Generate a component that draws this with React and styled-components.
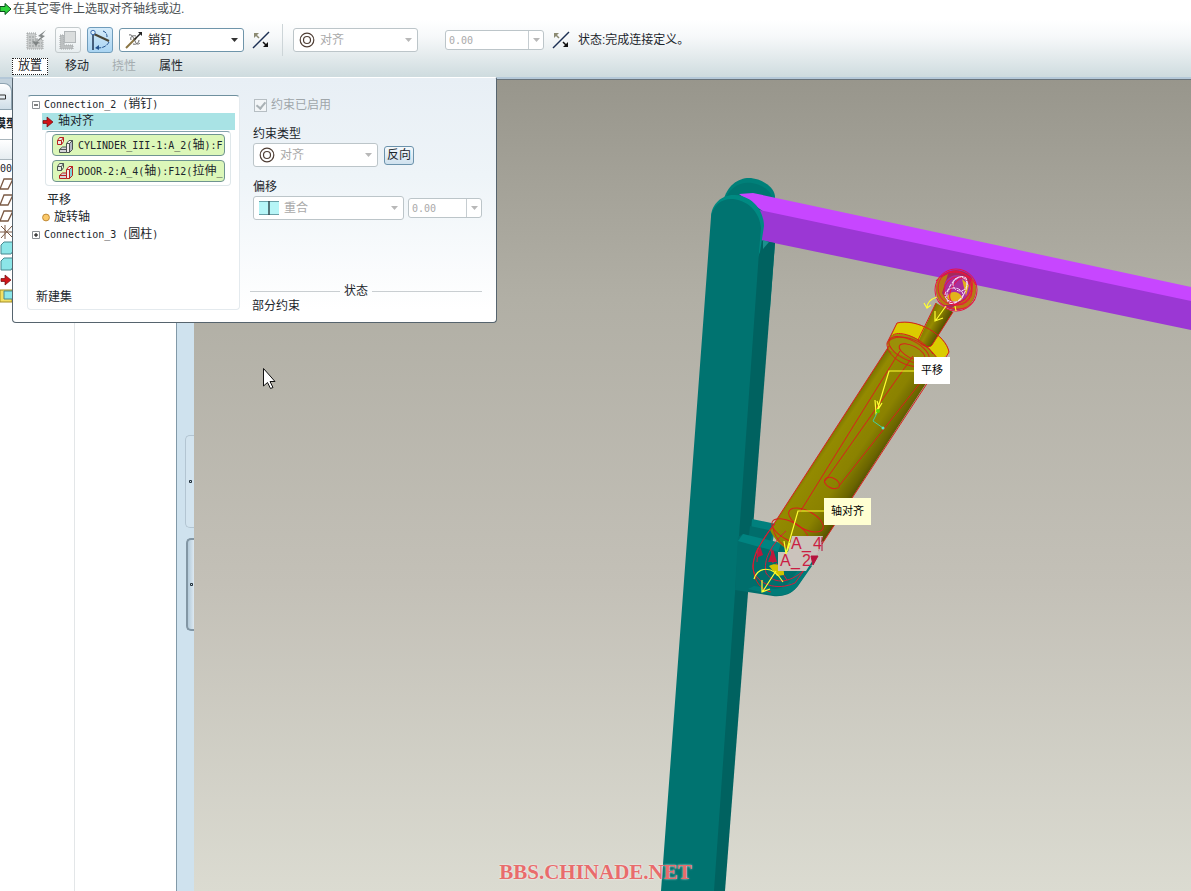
import React from 'react';
import styled, { createGlobalStyle } from 'styled-components';

const GlobalStyle = createGlobalStyle`
    * {
        box-sizing: border-box;
    }
    body {
        margin: 0;
        overflow: hidden;
        background: #fff;
    }
    body, button, input, select {
        font-family: "Liberation Sans", "Noto Sans CJK SC", sans-serif;
        font-size: 12px;
        line-height: 17px;
        color: #1c262c;
    }
    button {
        padding: 0;
        border: 0;
        background: none;
        white-space: nowrap;
    }
    svg {
        display: block;
        flex-shrink: 0;
    }
`

const Page = styled.div`
    display: flex;
    flex-direction: column;
    height: 100vh;
    position: relative;
    overflow: hidden;
`

const Header = styled.header`
    flex-shrink: 0;
    display: flex;
    flex-direction: column;
    background: linear-gradient(#fff 20px, #f7f9fa 36px, #e4ebed 56px, #cfdcdf 76px);
    border-bottom: 2px solid #b4c8d8;
    padding-bottom: 2px;
`

const Prompt = styled.div`
    display: flex;
    align-items: center;
    height: 18px;
    gap: 1px;
    margin-bottom: 6px;
    color: #4a4f52;
`

const Toolbar = styled.div`
    display: flex;
    align-items: center;
    gap: 6px;
    height: 32px;
    padding-left: 23px;
`

const Tool = styled.button`
    width: 26px;
    height: 26px;
    display: flex;
    align-items: center;
    justify-content: center;
    border-radius: 3px;
    border: 1px solid ${props => props.$active ? '#6f9cbb' : props.$framed ? '#c3cacc' : 'transparent'};
    background: ${props => props.$active ? 'linear-gradient(#d5ebfa, #a9d4f2)' : 'none'};
`

const FlipTool = styled.button`
    width: 22px;
    height: 22px;
    display: flex;
    align-items: center;
    justify-content: center;
`

const Separator = styled.div`
    width: 1px;
    height: 32px;
    margin: 0 4px;
    background: #cdd5d8;
`

const Field = styled.div`
    width: ${props => props.$width};
    height: 24px;
    display: flex;
    align-items: center;
    gap: 5px;
    padding: 0 5px;
    border: 1px solid ${props => props.$off ? '#bcc5c9' : '#6f95aa'};
    border-radius: 3px;
    background: #fff;
`

const Select = styled.select`
    flex: 1;
    min-width: 0;
    appearance: none;
    border: 0;
    padding: 0;
    background: none;
    color: #1c262c;
    &:disabled {
        color: #a9a9a9;
        opacity: 1;
    }
`

const Combo = styled.div`
    width: ${props => props.$width};
    height: 20px;
    display: flex;
    border: 1px solid #bcc5c9;
    border-radius: 3px;
    background: #fff;
`

const Number = styled.input`
    flex: 1;
    min-width: 0;
    border: 0;
    padding: 0 3px;
    background: none;
    color: #a9a9a9;
    font-family: "DejaVu Sans Mono", monospace;
    font-size: 10px;
`

const ComboButton = styled.button`
    width: 15px;
    display: flex;
    align-items: center;
    justify-content: center;
    border-left: 1px solid #c6cdd1;
`

const FieldSpacer = styled.div`
    width: 15px;
`

const Tabs = styled.nav`
    display: flex;
    gap: 11px;
    height: 19px;
    align-items: flex-end;
    padding-left: 12px;
`

const Tab = styled.button`
    height: 17px;
    line-height: 15px;
    padding: 0 5px;
    border: 1px dotted ${props => props.$active ? '#222' : 'transparent'};
    background: ${props => props.$active ? '#fff' : 'none'};
    &:disabled {
        color: #a5adb0;
    }
`

const Workspace = styled.main`
    flex: 1;
    min-height: 0;
    display: flex;
`

const Sidebar = styled.aside`
    width: 176px;
    flex-shrink: 0;
    display: flex;
    background: #fff;
`

const TreeColumn = styled.div`
    width: 75px;
    border-right: 1px solid #e3e6e8;
`

const TreeClip = styled.div`
    width: 12px;
    overflow: hidden;
    padding-top: 4px;
    display: flex;
    flex-direction: column;
    background: linear-gradient(#c3d2dc 30px, #fff 31px);
`

const SideTab = styled.div`
    height: 27px;
    border: 1px solid #8ea3b0;
    border-left: 0;
    border-radius: 0 8px 0 0;
    background: linear-gradient(#fff, #cfdee8);
    display: flex;
    align-items: center;
`

const SideTitle = styled.div`
    height: 29px;
    display: flex;
    align-items: center;
    justify-content: center;
    white-space: nowrap;
    font-weight: bold;
`

const SideHeader = styled.div`
    height: 21px;
    border-top: 1px solid #aab6bd;
    border-bottom: 1px solid #aab6bd;
    background: linear-gradient(#fff, #e6edf1);
`

const SideRow = styled.div`
    height: 16px;
    display: flex;
    align-items: center;
`

const Splitter = styled.div`
    width: 18px;
    flex-shrink: 0;
    display: flex;
    flex-direction: column;
    align-items: flex-end;
    gap: 10px;
    padding-top: 356px;
    background: #cfe2ee;
    border-left: 1px solid #8299a8;
`

const Grip = styled.button`
    width: ${props => props.$dark ? '8px' : '9px'};
    height: 93px;
    display: flex;
    align-items: center;
    justify-content: center;
    border: ${props => props.$dark ? '2px solid #8296a4' : '1px solid #b3c5d2'};
    border-right: 0;
    border-radius: 5px 0 0 5px;
    background: ${props => props.$dark ? 'linear-gradient(90deg, #b4cad9, #dce9f2)' : '#d3e4ef'};
`

const Viewport = styled.section`
    flex: 1;
    min-width: 0;
    position: relative;
    overflow: hidden;
    border-top: 1px solid #69737a;
    background: linear-gradient(#98968c, #b1afa5 27%, #c3c0b7 62%, #dbdbd1);
`

const Scene = styled.svg`
    width: 100%;
    height: 100%;
`

const Callout = styled.div`
    position: absolute;
    left: ${props => props.$x}px;
    top: ${props => props.$y}px;
    padding: 5px 7px;
    font-size: 11px;
    color: #000;
    background: ${props => props.$pale ? '#ffffd2' : '#fff'};
`

const Watermark = styled.div`
    position: absolute;
    left: 0;
    right: 0;
    bottom: 7px;
    text-align: center;
    font: bold 21px/24px "Liberation Serif", serif;
    color: #e86c6c;
    text-shadow: 0 0 2px #fff;
    pointer-events: none;
`

const Panel = styled.section`
    position: absolute;
    left: 12px;
    top: 77px;
    width: 485px;
    height: 246px;
    display: flex;
    gap: 10px;
    padding: 17px 14px 8px;
    border: 1px solid #56646e;
    border-top-color: #fff;
    border-radius: 2px 2px 4px 4px;
    background: linear-gradient(#e8eff5, #eef4f8 40%, #fff 95%);
`

const Collector = styled.div`
    width: 213px;
    flex-shrink: 0;
    display: flex;
    flex-direction: column;
    margin-bottom: 4px;
    border: 1px solid #e4eaee;
    border-top-color: #6f909e;
    border-radius: 4px;
    background: #fff;
    padding: 0 4px 3px;
`

const Item = styled.button`
    height: 17px;
    display: flex;
    align-items: center;
    gap: 4px;
    margin-left: ${props => props.$indent || 0}px;
    background: ${props => props.$selected ? '#a9e3e5' : 'none'};
`

const References = styled.div`
    display: flex;
    flex-direction: column;
    gap: 4px;
    margin: 1px 4px 6px 13px;
    padding: 2px 5px 3px 6px;
    border: 1px solid #dfe7ea;
    border-top-color: #86a3ae;
    border-radius: 4px;
`

const Chip = styled.button`
    height: 22px;
    display: flex;
    align-items: center;
    gap: 4px;
    padding: 0 1px 0 3px;
    border: 1px solid #6f9490;
    border-radius: 4px;
    background: #dcf7b9;
    overflow: hidden;
`

const Latin = styled.span`
    font-family: "DejaVu Sans Mono", monospace;
    font-size: 10px;
    white-space: pre;
`

const NewSet = styled(Item)`
    margin-top: auto;
    padding-left: 4px;
`

const Settings = styled.div`
    flex: 1;
    display: flex;
    flex-direction: column;
    padding-top: 1px;
`

const SettingRow = styled.div`
    display: flex;
    align-items: center;
    gap: 4px;
    padding-left: 3px;
    margin-top: ${props => props.$top || 0}px;
`

const CheckLabel = styled.label`
    display: flex;
    align-items: center;
    gap: 4px;
    height: 18px;
    color: #9fa6aa;
`

const Check = styled.input`
    appearance: none;
    width: 13px;
    height: 13px;
    margin: 0 0 0 1px;
    border: 1px solid #b6bec3;
    background: #f2f5f7;
    display: grid;
    place-items: center;
    &:checked::before {
        content: "";
        width: 4px;
        height: 7px;
        margin-bottom: 2px;
        border: solid #a9b1b5;
        border-width: 0 2px 2px 0;
        transform: rotate(40deg);
    }
`

const FlipButton = styled.button`
    width: 30px;
    height: 19px;
    margin-left: 2px;
    border: 1px solid #6c93ac;
    border-radius: 3px;
    background: linear-gradient(#f4f9fc, #cfe1ee);
`

const StatusHead = styled.div`
    display: flex;
    align-items: center;
    gap: 4px;
    height: 16px;
    margin-top: auto;
    &::before, &::after {
        content: "";
        flex: 9;
        height: 1px;
        background: #c9ced1;
    }
    &::after {
        flex: 11;
    }
`

const StatusText = styled.div`
    padding-left: 2px;
    height: 15px;
    line-height: 15px;
`

// Latin runs use the fixed pitch face, everything else the CJK one
const Mixed = ({ text }) => (
    <span>
        {text.split(/([\x20-\x7e]+)/).map((part, i) =>
            /[\x20-\x7e]/.test(part) ? <Latin key={i}>{part}</Latin> : part
        )}
    </span>
)

const Arrow = ({ color = '#333' }) => (
    <svg width="7" height="4" viewBox="0 0 7 4"><path d="M0 0h7L3.500 4z" fill={color} /></svg>
)

const PromptIcon = () => (
    <svg width="12" height="14" viewBox="0 0 12 14">
        <path d="M0 4.500h5V1.500l6 5.500-6 5.500V9.500H0z" fill="#2fd33c" stroke="#0b4f1c" />
    </svg>
)

const RedArrow = () => (
    <svg width="12" height="12" viewBox="0 0 12 12">
        <path d="M1 4.500h4V1l6 5-6 5V7.500H1z" fill="#d01418" stroke="#6d0c10" strokeWidth=".7" />
    </svg>
)

const FlipIcon = () => (
    <svg width="18" height="18" viewBox="0 0 18 18">
        <path d="M1 17 17 1" stroke="#1b2f52" strokeWidth="1.500" />
        <path d="M2 2h5L2 7z" fill="#8b8a72" />
        <path d="m4 4 3 3" stroke="#8b8a72" strokeWidth="1.500" />
        <path d="M16 16h-5l5-5z" fill="#111" />
        <path d="m11 11 3 3" stroke="#111" strokeWidth="1.500" />
    </svg>
)

const SketchIcon = () => (
    <svg width="22" height="22" viewBox="0 0 22 22">
        <path d="M2 4h9v6h3l4 1v9H2z" fill="#c9cccc" stroke="#9a9e9e" strokeDasharray="1 1" />
        <path d="M4 8h6M4 11h9M4 14h13M4 17h13" stroke="#979c9c" strokeDasharray="2 1" />
        <path d="m7 12 4 5 3-4z" fill="#7d8282" />
        <path d="m21 1-8 6 3 1-8 8 12-9-3-1z" fill="#858a8a" />
    </svg>
)

const CopyIcon = () => (
    <svg width="20" height="20" viewBox="0 0 20 20">
        <path d="M2 5h4v10h9v4H2z" fill="#bcc0c1" stroke="#a4a9aa" strokeDasharray="1 1" />
        <rect x="6.500" y="1.500" width="11" height="11" fill="#dadddd" stroke="#b2b7b9" />
    </svg>
)

const HingeIcon = () => (
    <svg width="22" height="22" viewBox="0 0 22 22" fill="none">
        <path d="M4 5v16" stroke="#1f3553" strokeWidth="1.500" />
        <path d="m5 5 15 7" stroke="#4b4637" strokeWidth="2" />
        <circle cx="4" cy="3.500" r="2.200" fill="#dff1ff" stroke="#3b6cae" />
        <path d="M14 2c3 1 4 3 4 6M20 13c-2 4-6 6-11 6" stroke="#24528e" strokeDasharray="4 1" />
        <path d="m10 16-4 3 4 2z" fill="#24528e" />
    </svg>
)

const PinIcon = () => (
    <svg width="18" height="18" viewBox="0 0 18 18" fill="none">
        <path d="M1 17 11 7" stroke="#8b7543" strokeWidth="2" />
        <path d="m9 9 7-7" stroke="#222" strokeWidth="1.500" />
        <path d="M17 1v4l-4-4z" fill="#222" />
        <path d="M4 4c3-1 4 2 6 6 1 3 3 4 5 2M11 5C7 4 5 6 6 9M8 13c3 1 6-1 6-4" stroke="#666" />
    </svg>
)

const AlignIcon = () => (
    <svg width="16" height="16" viewBox="0 0 16 16" fill="none" stroke="#4f3e35" strokeWidth="1.200">
        <circle cx="8" cy="8" r="6.800" />
        <circle cx="8" cy="8" r="3.500" />
    </svg>
)

const CoincidentIcon = () => (
    <svg width="20" height="16" viewBox="0 0 20 16">
        <path d="M0 1h20v14H0z" fill="#b6f5f7" />
        <path d="M0 1.500h20M0 14.500h20" stroke="#6aa0a8" />
        <path d="M10 1v14" stroke="#33484e" strokeWidth="1.500" />
    </svg>
)

const PartIcon = ({ first }) => {
    const a = first ? '#b92222' : '#4c5652'
    const b = first ? '#4c5652' : '#b92222'
    return (
        <svg width="18" height="18" viewBox="0 0 18 18" strokeLinejoin="round">
            <path d="M1.500 4.500h4v4h-4zM1.500 4.500l2-3h4l-2 3M7.500 1.500v4l-2 3" fill="#e8ede4" stroke={a} />
            <path d="M3.500 13.500 6.500 11h4v5.500h-7zM3.500 13.500h7" fill="#d5d5d8" stroke={b} />
            <path d="M10.500 7.500h3v9h-3zM10.500 7.500l2.500-3h3.500l-3 3" fill="#f3eded" stroke={b} />
            <path d="M16.500 4.500v9l-3 3v-9z" fill={first ? '#b4b8c4' : '#7ed3d6'} stroke={b} />
        </svg>
    )
}

const Expander = ({ open }) => (
    <svg width="8" height="8" viewBox="0 0 8 8">
        <path d="M.5.5h7v7h-7z" fill="#fff" stroke="#8a8f93" />
        <path d={open ? 'M2 4h4' : 'M2 4h4M4 2v4'} stroke="#000" />
    </svg>
)

const Bullet = () => (
    <svg width="8" height="9" viewBox="0 0 8 9"><circle cx="4" cy="4.500" r="3.400" fill="#fbc969" stroke="#c08a37" /></svg>
)

const Dot = () => (
    <svg width="3" height="3" viewBox="0 0 3 3"><path d="M.5.5h2v2h-2z" fill="#cfe2ee" stroke="#22303a" /></svg>
)

const PlaneIcon = () => (
    <svg width="14" height="12" viewBox="0 0 14 12"><path d="M0 11 4 1h9L8 11z" fill="none" stroke="#7a5944" strokeWidth="1.300" /></svg>
)

const CsysIcon = () => (
    <svg width="14" height="16" viewBox="0 0 14 16" stroke="#7a5944" fill="none">
        <path d="M0 8h14M1 2l12 12M12 2 1 14M5 1v14" />
    </svg>
)

const SolidIcon = ({ gold }) => (
    <svg width="14" height="14" viewBox="0 0 14 14">
        {gold && <path d="M0 1h12v12H0z" fill="#f3e063" stroke="#a28d25" />}
        <path d={gold ? 'M4 2h10v8H4z' : 'M1 4l3-3h9v9l-2 3H1z'} fill="#8ce6e8" stroke="#47878f" />
    </svg>
)

const TreeTabIcon = () => (
    <svg width="7" height="6" viewBox="0 0 7 6"><path d="M0 1h5.500v4H0" fill="none" stroke="#333" /></svg>
)

const Model = () => (
    <Scene role="img" aria-label="装配模型">
        <defs>
            <linearGradient id="barrel" gradientUnits="userSpaceOnUse" x1="826" y1="435" x2="876" y2="469">
                <stop offset="0" stopColor="#6f6800" />
                <stop offset=".15" stopColor="#938a00" />
                <stop offset=".6" stopColor="#8b8200" />
                <stop offset=".85" stopColor="#6b6500" />
                <stop offset="1" stopColor="#4a4705" />
            </linearGradient>
            <linearGradient id="rod" gradientUnits="userSpaceOnUse" x1="926" y1="320" x2="942" y2="329">
                <stop offset="0" stopColor="#7c7200" />
                <stop offset=".4" stopColor="#968b00" />
                <stop offset="1" stopColor="#575200" />
            </linearGradient>
        </defs>
        <g transform="translate(-194 -80)">
            {/* post */}
            <path d="M723 202C727 184 740 177 751 178C765 180 774 188 775 196V243L770 310H730Z" fill="#008079" />
            <path d="M724 203C728 187 741 181 752 183C763 185 770 190 772 197V240H730Z" fill="#007570" />
            <path d="M739 194 753 193 1191 287V303L764 212Z" fill="#c746ff" />
            <path d="M755 209 764 211 1191 301V330L760 240Z" fill="#9b37d4" />
            <path d="M759 240 775 243 725 891H712Z" fill="#006260" />
            <path d="M763 240 769 242 763 249Z" fill="#1c918e" />
            <path d="M711 216C712 203 723 194 735 195C753 196 764 211 764 226L760 252 740 300Z" fill="#008a82" />
            <path d="M711 217C713 204 723 198 733 199C750 201 760 214 761 228L759 252 714 891H661Z" fill="#007370" />

            {/* bracket */}
            <path d="M752 519 776 524 771 550 750 546Z" fill="#00807d" />
            <path d="M750 526 773 531 769 548 748 544Z" fill="#006d6b" />
            <path d="M738 537 743 534 795 547 815 560 797 587C791 595 781 597 773 596L735 590Z" fill="#006e6c" />
            <path d="M738 541 743 534 781 543 778 552Z" fill="#008481" />
            <path d="M748 589 773 595C783 597 792 593 798 586L812 566 804 562 790 581C784 589 776 590 768 588L754 586Z" fill="#007b78" />

            {/* cylinder */}
            <path d="M889 346 770 530C775 541 783 548 792 551L824 541 943 357Z" fill="url(#barrel)" />
            <path d="M897 323C917 318 946 335 949 352L943 359 888 349 887 343Z" fill="#9c9200" />
            <path d="M897 323C917 318 947 336 949 353L940 361C924 338 906 331 892 335Z" fill="#dbcc00" />
            <path d="M893 335C910 332 929 342 936 360H914L888 350Z" fill="#9b8f08" />
            <path d="M936 303 919 340C919 345 930 349 932 345L953 312Z" fill="url(#rod)" />
            <g fill="none" stroke="#d8201c" strokeWidth="1">
                <path d="M889 346 757 550C749 568 754 588 771 592M943 359 822 544M900 351 800 512M913 356 825 481M935 364 839 486" />
                <path d="M897 323C917 318 946 335 949 352M897 323 887 343C886 355 905 370 925 366M949 352 943 362" />
                <path d="M893 335C900 330 923 338 933 354M889 341C900 331 927 341 938 360M918 340C919 345 930 349 932 345M936 303 918 340M953 312 932 345" />
                <ellipse cx="909" cy="350" rx="22" ry="10" transform="rotate(27 909 350)" />
                <ellipse cx="912" cy="352" rx="14" ry="6" transform="rotate(27 912 352)" />
                <ellipse cx="832" cy="483" rx="8" ry="5" transform="rotate(25 832 483)" />
                <ellipse cx="806" cy="520" rx="19" ry="9" transform="rotate(28 806 520)" />
                <ellipse cx="790" cy="531" rx="20" ry="9" transform="rotate(28 790 531)" />
                <path d="M773 528C775 540 785 548 795 551" />
            </g>

            {/* ball end */}
            <circle cx="956" cy="290" r="20" fill="#a52b5a" />
            <path d="M938 279 948 274 942 293 950 305 943 305C935 298 935 286 938 279ZM972 278C980 288 975 303 964 309L950 309 966 299Z" fill="#b87913" />
            <circle cx="957" cy="288" r="13" fill="#a9309c" />
            <path d="M947 297C950 290 959 291 962 297S948 303 947 297ZM962 279 969 285 966 296Z" fill="#e2b21b" />
            <g fill="none" stroke="#ed123f">
                <circle cx="956" cy="290" r="21" />
                <circle cx="955" cy="288" r="17" />
                <circle cx="958" cy="291" r="14" />
                <ellipse cx="961" cy="290" rx="9" ry="15" transform="rotate(35 961 290)" />
                <path d="M936 281C944 270 966 267 976 285M938 301C948 311 968 313 975 299" />
            </g>
            <g fill="none" stroke="#f4dff6" strokeDasharray="4 1">
                <circle cx="960" cy="284" r="7" />
                <ellipse cx="954" cy="295" rx="9" ry="7" />
                <ellipse cx="957" cy="290" rx="8" ry="15" transform="rotate(30 957 290)" />
            </g>

            {/* lower joint */}
            <g fill="none" stroke="#d51e3c">
                <path d="M775 524C763 536 751 560 753 569C757 585 777 591 795 583L819 549" />
                <path d="M786 531C771 545 763 560 766 573C774 585 792 584 808 566" />
                <path d="M758 548 757 562M771 549 773 563M776 563 787 580" />
            </g>
            <path d="M756 558 760 546 763 555ZM768 562 773 549 777 562Z" fill="#be173b" />
            <path d="M769 566C777 561 785 567 784 575L777 576Z" fill="#d1c400" />
            <path d="M792 536H823L818 552 806 571H778V552H788Z" fill="#cbc3bc" />
            <path d="M822 537v14M811 556h7l-5 9z" stroke="#b5133c" fill="#b5133c" />
            <g fill="#ca1d42" fontFamily="Liberation Sans, sans-serif" fontSize="16">
                <text x="791" y="549">A</text>
                <text x="802" y="549">_</text>
                <text x="813" y="549">4</text>
                <text x="780" y="566">A</text>
                <text x="791" y="566">_</text>
                <text x="802" y="566">2</text>
            </g>

            {/* leaders and rotation arrows */}
            <g fill="none" stroke="#ffff32" strokeWidth="1.200">
                <path d="M914 371H889L877 411M875 400 876 413 882 403M877 401 879 407" />
                <path d="M824 511H798L786 553M784 541 786 554 790 543" />
                <path d="M937 297C931 299 927 302 927 308M931 305 927 308 924 303M946 306 936 320M935 311 935 321 943 318M955 306 956 311" />
                <path d="M754 579C758 567 772 564 783 582M776 571 763 591M762 580 762 592 770 589" />
            </g>
            <path d="M877 413 873 421 883 428" fill="none" stroke="#42cfa0" />
            <circle cx="878" cy="411" r="2" fill="#5ad200" />
            <circle cx="883" cy="428" r="1.500" fill="#56e6c6" />

            {/* pointer */}
            <path d="M263.500 368.500V386L267.500 382.500 270.500 388.500 273 387.500 270 381.500H275Z" fill="#fff" stroke="#111" />
        </g>
    </Scene>
)

const App = () => {
    return (
        <Page>
            <GlobalStyle />
            <Header>
                <Prompt><PromptIcon />在其它零件上选取对齐轴线或边.</Prompt>
                <Toolbar>
                    <Tool aria-label="草绘" disabled><SketchIcon /></Tool>
                    <Tool aria-label="复制" disabled $framed><CopyIcon /></Tool>
                    <Tool aria-label="机构连接" $active><HingeIcon /></Tool>
                    <Field $width="125px">
                        <PinIcon />
                        <Select aria-label="连接类型"><option>销钉</option></Select>
                        <Arrow />
                    </Field>
                    <FlipTool aria-label="反向"><FlipIcon /></FlipTool>
                    <Separator />
                    <Field $width="125px" $off>
                        <AlignIcon />
                        <Select aria-label="约束" disabled><option>对齐</option></Select>
                        <Arrow color="#b8b8b8" />
                    </Field>
                    <FieldSpacer />
                    <Combo $width="99px">
                        <Number aria-label="偏移值" defaultValue="0.00" disabled />
                        <ComboButton aria-label="最近的值" disabled><Arrow color="#b8b8b8" /></ComboButton>
                    </Combo>
                    <FlipTool aria-label="反转偏移"><FlipIcon /></FlipTool>
                    <span>状态:完成连接定义。</span>
                </Toolbar>
                <Tabs>
                    <Tab $active>放置</Tab>
                    <Tab>移动</Tab>
                    <Tab disabled>挠性</Tab>
                    <Tab>属性</Tab>
                </Tabs>
            </Header>
            <Workspace>
                <Sidebar>
                    <TreeColumn>
                        <TreeClip>
                            <SideTab><TreeTabIcon /></SideTab>
                            <SideTitle>模型</SideTitle>
                            <SideHeader />
                            <SideRow><Latin>000</Latin></SideRow>
                            <SideRow><PlaneIcon /></SideRow>
                            <SideRow><PlaneIcon /></SideRow>
                            <SideRow><PlaneIcon /></SideRow>
                            <SideRow><CsysIcon /></SideRow>
                            <SideRow><SolidIcon /></SideRow>
                            <SideRow><SolidIcon /></SideRow>
                            <SideRow><RedArrow /></SideRow>
                            <SideRow><SolidIcon gold /></SideRow>
                        </TreeClip>
                    </TreeColumn>
                </Sidebar>
                <Splitter>
                    <Grip aria-label="折叠树"><Dot /></Grip>
                    <Grip aria-label="折叠浏览器" $dark><Dot /></Grip>
                </Splitter>
                <Viewport>
                    <Model />
                    <Callout $x={720} $y={277}>平移</Callout>
                    <Callout $x={630} $y={418} $pale>轴对齐</Callout>
                </Viewport>
            </Workspace>
            <Panel>
                <Collector>
                    <Item><Expander open /><Mixed text="Connection_2 (销钉)" /></Item>
                    <Item $indent={10} $selected><RedArrow />轴对齐</Item>
                    <References>
                        <Chip><PartIcon first /><Mixed text="CYLINDER_III-1:A_2(轴):F" /></Chip>
                        <Chip><PartIcon /><Mixed text="DOOR-2:A_4(轴):F12(拉伸_" /></Chip>
                    </References>
                    <Item $indent={15}>平移</Item>
                    <Item $indent={10}><Bullet />旋转轴</Item>
                    <Item><Expander /><Mixed text="Connection_3 (圆柱)" /></Item>
                    <NewSet>新建集</NewSet>
                </Collector>
                <Settings>
                    <SettingRow>
                        <CheckLabel><Check type="checkbox" defaultChecked disabled />约束已启用</CheckLabel>
                    </SettingRow>
                    <SettingRow $top={12}><label htmlFor="kind">约束类型</label></SettingRow>
                    <SettingRow>
                        <Field $width="125px" $off>
                            <AlignIcon />
                            <Select id="kind" disabled><option>对齐</option></Select>
                            <Arrow color="#b8b8b8" />
                        </Field>
                        <FlipButton>反向</FlipButton>
                    </SettingRow>
                    <SettingRow $top={12}><label htmlFor="offset">偏移</label></SettingRow>
                    <SettingRow>
                        <Field $width="151px" $off>
                            <CoincidentIcon />
                            <Select id="offset" disabled><option>重合</option></Select>
                            <Arrow color="#b8b8b8" />
                        </Field>
                        <Combo $width="74px">
                            <Number aria-label="偏移距离" defaultValue="0.00" disabled />
                            <ComboButton aria-label="最近的距离" disabled><Arrow color="#b8b8b8" /></ComboButton>
                        </Combo>
                    </SettingRow>
                    <StatusHead>状态</StatusHead>
                    <StatusText>部分约束</StatusText>
                </Settings>
            </Panel>
            <Watermark>BBS.CHINADE.NET</Watermark>
        </Page>
    );
}

export default App;
